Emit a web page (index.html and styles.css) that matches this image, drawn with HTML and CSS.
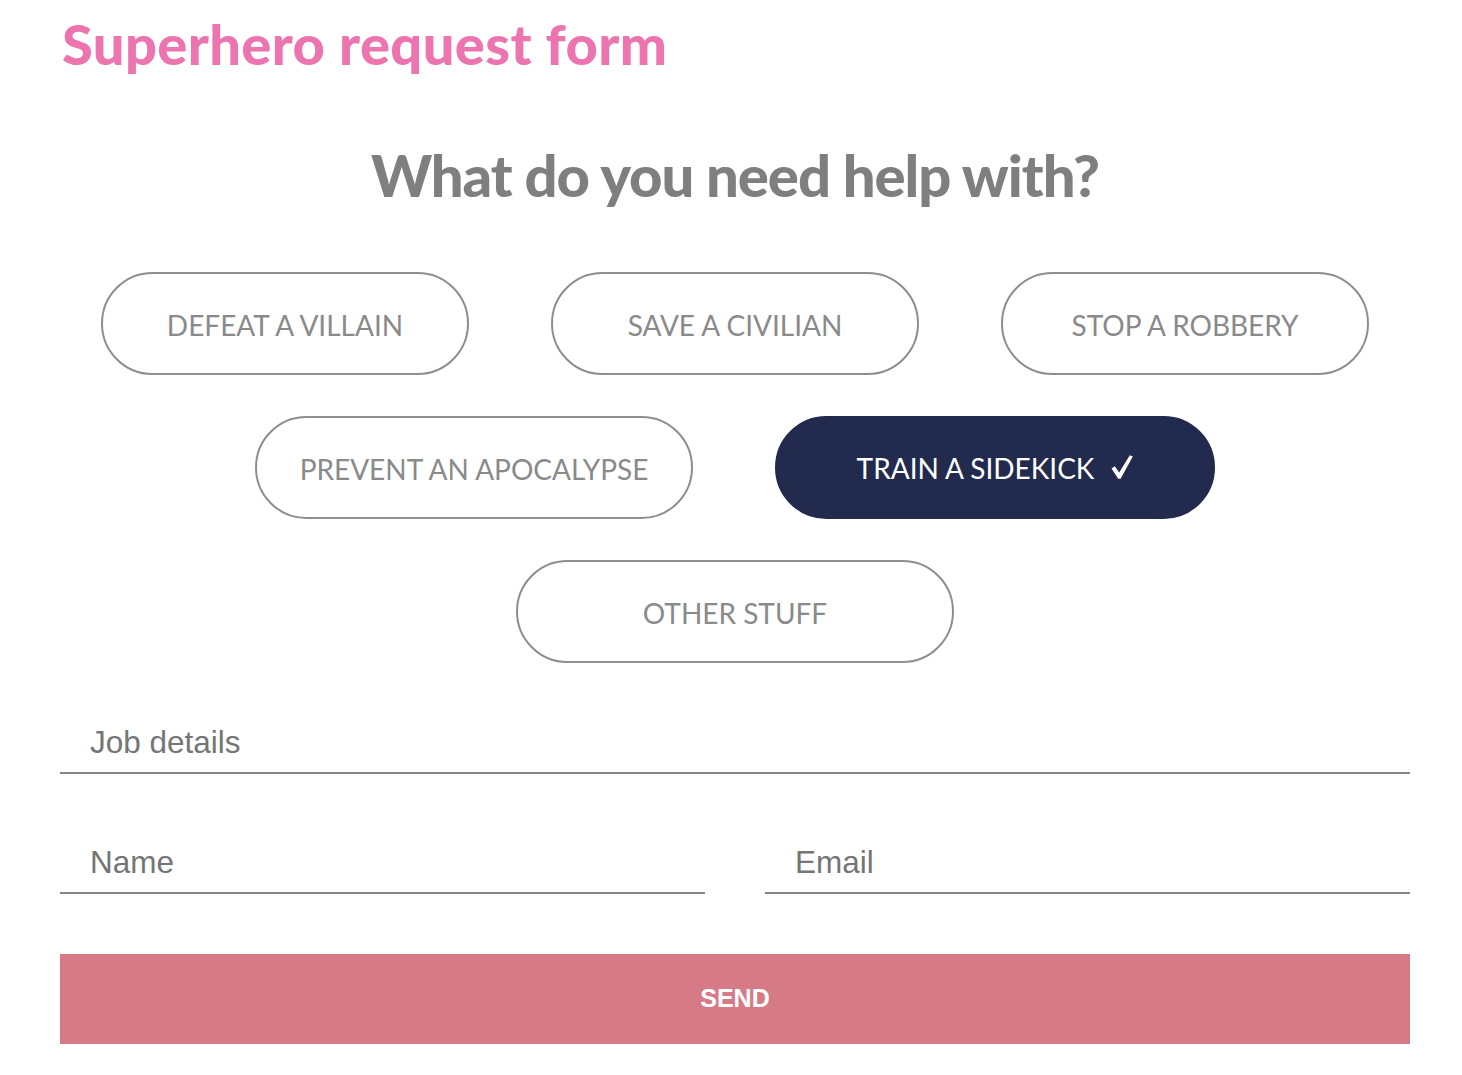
FILE: index.html
```html
<!DOCTYPE html>
<html lang="en">
<head>
<meta charset="utf-8">
<title>Superhero request form</title>
<link rel="stylesheet" href="styles.css">
</head>
<body>
<main class="page">
  <h1 class="title">Superhero request form</h1>
  <h2 class="question">What do you need help with?</h2>
  <div class="options">
    <button class="option w-368">DEFEAT A VILLAIN</button>
    <button class="option w-368">SAVE A CIVILIAN</button>
    <button class="option w-368">STOP A ROBBERY</button>
    <button class="option w-438">PREVENT AN APOCALYPSE</button>
    <button class="option w-440 selected">TRAIN A SIDEKICK<svg class="check" width="22" height="24" viewBox="0 0 22 24" aria-hidden="true"><path d="M0.5 13.5 L3.8 11.2 L8.2 17.6 L18.8 0.2 L21.8 1.6 L9.6 23.8 L7.2 23.8 Z" fill="#ffffff"/></svg></button>
    <button class="option w-438">OTHER STUFF</button>
  </div>
  <form class="form">
    <input class="field" type="text" placeholder="Job details">
    <div class="row">
      <input class="field" type="text" placeholder="Name">
      <input class="field" type="email" placeholder="Email">
    </div>
    <button class="send" type="button">SEND</button>
  </form>
</main>
</body>
</html>
```
FILE: styles.css
```css
html, body {
  margin: 0;
  padding: 0;
  background: #ffffff;
}
.page {
  width: 1350px;
  padding: 0 52px 0 60px;
  font-family: Lato, "Open Sans", sans-serif;
}
.title {
  margin: 10px 0 0 2px;
  font-size: 56px;
  line-height: 1.2;
  font-weight: 900;
  letter-spacing: 0.4px;
  color: #ec75b0;
}
.question {
  margin: 63px 0 0;
  font-size: 58px;
  line-height: 1.2;
  font-weight: 900;
  letter-spacing: -1.05px;
  color: #7f7f7f;
  text-align: center;
}
.options {
  margin-top: 62px;
  display: flex;
  flex-wrap: wrap;
  justify-content: center;
  gap: 41px 82px;
}
.option {
  height: 103px;
  box-sizing: border-box;
  border: 2px solid #8e8e8e;
  border-radius: 52px;
  background: #ffffff;
  font-family: Lato, "Open Sans", sans-serif;
  font-size: 28px;
  color: #8a8a8a;
  padding: 3px 0 0;
  display: inline-flex;
  align-items: center;
  justify-content: center;
}
.w-368 { width: 368px; }
.w-438 { width: 438px; }
.w-440 { width: 440px; }
.option.selected {
  background: #222a4e;
  border-color: #222a4e;
  color: #ffffff;
  padding-top: 1px;
}
.check {
  margin-left: 17px;
  margin-bottom: 2px;
  display: block;
}
.form {
  margin-top: 51px;
  display: flex;
  flex-direction: column;
  gap: 60px;
}
.row {
  display: flex;
  gap: 60px;
}
.row .field {
  flex: 1;
  min-width: 0;
}
.field {
  height: 60px;
  box-sizing: border-box;
  border: none;
  border-bottom: 2px solid #858585;
  padding: 0 0 0 30px;
  font-family: "Liberation Sans", Arial, sans-serif;
  font-size: 31.5px;
  color: #555555;
  background: transparent;
  outline: none;
}
.field::placeholder {
  color: #757575;
}
.send {
  height: 90px;
  border: none;
  background: #d67a87;
  color: #ffffff;
  font-family: "Liberation Sans", Arial, sans-serif;
  font-weight: 700;
  font-size: 25px;
  padding: 0;
}
```
